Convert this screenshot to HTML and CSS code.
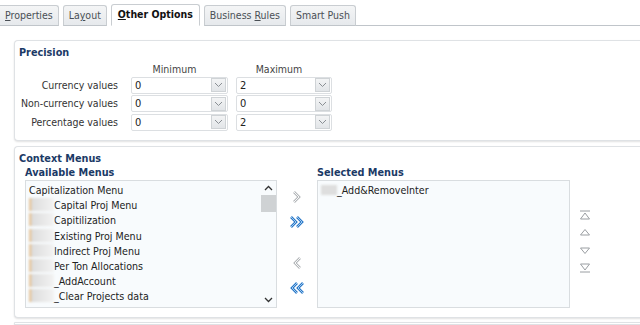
FILE: index.html
```html
<!DOCTYPE html>
<html>
<head>
<meta charset="utf-8">
<link rel="stylesheet" href="styles.css">
</head>
<body>
<div class="tabs">
  <div class="tab"><u>P</u>roperties</div>
  <div class="tab">La<u>y</u>out</div>
  <div class="tab active"><u>O</u>ther Options</div>
  <div class="tab">Business <u>R</u>ules</div>
  <div class="tab">Smart Push</div>
  <div class="tab-fill"></div>
</div>

<div class="panel precision">
  <div class="title">Precision</div>
  <div class="grid">
    <div></div><div class="colhead">Minimum</div><div class="colhead">Maximum</div>
    <div class="lbl">Currency values</div>
    <div class="sel"><span>0</span><i class="dd"><svg width="9" height="6" viewBox="0 0 9 6"><path d="M1 1 L4.5 4.5 L8 1" fill="none" stroke="#8a8f94" stroke-width="1"/></svg></i></div>
    <div class="sel"><span>2</span><i class="dd"><svg width="9" height="6" viewBox="0 0 9 6"><path d="M1 1 L4.5 4.5 L8 1" fill="none" stroke="#8a8f94" stroke-width="1"/></svg></i></div>
    <div class="lbl">Non-currency values</div>
    <div class="sel"><span>0</span><i class="dd"><svg width="9" height="6" viewBox="0 0 9 6"><path d="M1 1 L4.5 4.5 L8 1" fill="none" stroke="#8a8f94" stroke-width="1"/></svg></i></div>
    <div class="sel"><span>0</span><i class="dd"><svg width="9" height="6" viewBox="0 0 9 6"><path d="M1 1 L4.5 4.5 L8 1" fill="none" stroke="#8a8f94" stroke-width="1"/></svg></i></div>
    <div class="lbl">Percentage values</div>
    <div class="sel"><span>0</span><i class="dd"><svg width="9" height="6" viewBox="0 0 9 6"><path d="M1 1 L4.5 4.5 L8 1" fill="none" stroke="#8a8f94" stroke-width="1"/></svg></i></div>
    <div class="sel"><span>2</span><i class="dd"><svg width="9" height="6" viewBox="0 0 9 6"><path d="M1 1 L4.5 4.5 L8 1" fill="none" stroke="#8a8f94" stroke-width="1"/></svg></i></div>
  </div>
</div>

<div class="panel context">
  <div class="title">Context Menus</div>
  <div class="shuttle">
    <div class="col">
      <div class="subtitle">Available Menus</div>
      <div class="listbox">
        <div class="items">
          <div class="item">Capitalization Menu</div>
          <div class="item"><span class="blur"></span>Capital Proj Menu</div>
          <div class="item"><span class="blur"></span>Capitilization</div>
          <div class="item"><span class="blur"></span>Existing Proj Menu</div>
          <div class="item"><span class="blur"></span>Indirect Proj Menu</div>
          <div class="item"><span class="blur"></span>Per Ton Allocations</div>
          <div class="item"><span class="blur"></span>_AddAccount</div>
          <div class="item"><span class="blur"></span>_Clear Projects data</div>
          <div class="item">CEPX_Upload Details</div>
        </div>
        <div class="vscroll">
          <svg class="sarrow" width="9" height="6" viewBox="0 0 9 6"><path d="M1 5 L4.5 1.5 L8 5" fill="none" stroke="#333" stroke-width="1.3"/></svg>
          <div class="thumb"></div>
          <div class="track"></div>
          <svg class="sarrow" width="9" height="6" viewBox="0 0 9 6"><path d="M1 1 L4.5 4.5 L8 1" fill="none" stroke="#333" stroke-width="1.3"/></svg>
        </div>
      </div>
    </div>
    <div class="movers">
      <svg width="14" height="14" viewBox="0 0 14 14"><path d="M4 2 L9 7 L4 12" fill="none" stroke="#b4b7ba" stroke-width="2.6"/><path d="M4 2 L9 7 L4 12" fill="none" stroke="#fff" stroke-width="0.9"/></svg>
      <svg width="16" height="14" viewBox="0 0 16 14"><path d="M2 2 L7 7 L2 12 M8 2 L13 7 L8 12" fill="none" stroke="#2a78c8" stroke-width="2.6"/><path d="M2 2 L7 7 L2 12 M8 2 L13 7 L8 12" fill="none" stroke="#bfe0f7" stroke-width="0.8"/></svg>
      <div class="gap"></div>
      <svg width="14" height="14" viewBox="0 0 14 14"><path d="M10 2 L5 7 L10 12" fill="none" stroke="#b4b7ba" stroke-width="2.6"/><path d="M10 2 L5 7 L10 12" fill="none" stroke="#fff" stroke-width="0.9"/></svg>
      <svg width="16" height="14" viewBox="0 0 16 14"><path d="M14 2 L9 7 L14 12 M8 2 L3 7 L8 12" fill="none" stroke="#2a78c8" stroke-width="2.6"/><path d="M14 2 L9 7 L14 12 M8 2 L3 7 L8 12" fill="none" stroke="#bfe0f7" stroke-width="0.8"/></svg>
    </div>
    <div class="col">
      <div class="subtitle">Selected Menus</div>
      <div class="listbox sel-box">
        <div class="items">
          <div class="item"><span class="blur small"></span>_Add&amp;RemoveInter</div>
        </div>
      </div>
    </div>
    <div class="reorder">
      <svg width="12" height="10" viewBox="0 0 12 10"><path d="M1 1 H11" stroke="#9a9ea2" stroke-width="1"/><path d="M1.5 9 L6 3 L10.5 9 Z" fill="none" stroke="#9a9ea2" stroke-width="1"/></svg>
      <svg width="12" height="10" viewBox="0 0 12 10"><path d="M1.5 8 L6 2.5 L10.5 8 Z" fill="none" stroke="#9a9ea2" stroke-width="1"/></svg>
      <svg class="down" width="12" height="10" viewBox="0 0 12 10"><path d="M1.5 2 L6 7.5 L10.5 2 Z" fill="none" stroke="#9a9ea2" stroke-width="1"/></svg>
      <svg width="12" height="10" viewBox="0 0 12 10"><path d="M1 9 H11" stroke="#9a9ea2" stroke-width="1"/><path d="M1.5 1 L6 7 L10.5 1 Z" fill="none" stroke="#9a9ea2" stroke-width="1"/></svg>
    </div>
  </div>
</div>

<div class="panel bottom"></div>
</body>
</html>
```

FILE: styles.css
```css
* { box-sizing: border-box; }
html, body { margin: 0; padding: 0; background: #fff; }
html { height: 325px; overflow: hidden; }
body {
  font-family: "DejaVu Sans Condensed", "Liberation Sans", sans-serif;
  font-size: 10.5px;
  color: #333;
  width: 640px;
  height: 325px;
  overflow: hidden;
}
u { text-decoration: underline; }

.tabs {
  display: flex;
  align-items: flex-end;
  padding-top: 5px;
  height: 26px;
}
.tab {
  height: 21px;
  padding: 0 5px;
  margin-right: 4px;
  border: 1px solid #c9cdd1;
  border-bottom: 1px solid #c0c5ca;
  border-radius: 3px 3px 0 0;
  background: linear-gradient(#f4f5f6, #e6e9ec);
  color: #4a4f55;
  font-size: 10.5px;
  line-height: 19px;
  white-space: nowrap;
}
.tab:first-child { border-left: none; border-radius: 0 3px 0 0; padding-left: 5px; }
.tab.active {
  height: 22px;
  background: #fff;
  border-bottom-color: #fff;
  color: #111;
  font-weight: bold;
  padding: 0 6px;
}
.tab-fill { flex: 1; border-bottom: 1px solid #c0c5ca; margin-left: -4px; }

.panel {
  margin-left: 14px;
  margin-right: -10px;
  border: 1px solid #dfe2e5;
  border-right: none;
  border-radius: 4px 0 0 4px;
  box-shadow: 0 1px 2px rgba(0,0,0,0.12);
  background: #fff;
}
.precision {
  margin-top: 14px;
  height: 101px;
  padding: 5px 0 0 0;
}
.title {
  font-weight: bold;
  color: #1b3a66;
  font-size: 10.8px;
  padding-left: 4px;
  line-height: 14px;
}
.grid {
  display: grid;
  grid-template-columns: 117px 97px 96px;
  column-gap: 8px;
  row-gap: 1.5px;
  margin-left: -14px;
  margin-top: 4px;
}
.colhead { text-align: center; line-height: 11px; color: #444; }
.lbl { text-align: right; line-height: 17px; white-space: nowrap; }
.sel {
  margin-left: 5px;
  margin-right: -5px;
  height: 17px;
  border: 1px solid #dcdfe2;
  background: #fff;
  display: flex;
  align-items: center;
  justify-content: space-between;
  padding-left: 3px;
  border-radius: 2px;
}
.sel span { line-height: 15px; color: #222; font-size: 11px; }
.dd {
  width: 15px;
  height: 14px;
  margin-right: 1px;
  border: 1px solid #cfd3d6;
  background: linear-gradient(#f3f4f5, #e2e5e8);
  display: flex;
  align-items: center;
  justify-content: center;
}

.context {
  margin-top: 5px;
  height: 172px;
  padding-top: 5px;
}
.shuttle {
  display: flex;
  align-items: flex-start;
  padding-left: 10px;
}
.col { display: flex; flex-direction: column; }
.subtitle {
  font-weight: bold;
  color: #1b3a66;
  font-size: 10.8px;
  line-height: 14px;
}
.listbox {
  width: 252px;
  height: 128px;
  border: 1px solid #d9dde0;
  background: #f8fbfd;
  display: flex;
  overflow: hidden;
}
.items { flex: 1; padding: 2px 0 0 3px; overflow: hidden; }
.item { line-height: 15.2px; white-space: nowrap; color: #222; font-size: 10.6px; }
.blur {
  display: inline-block;
  width: 25px;
  height: 13px;
  vertical-align: -2px;
  background: linear-gradient(90deg, #e6c7a0 0 2px, #dcdcdc 3px, #e9e9e9 60%, #f3f3f3);
  filter: blur(1px);
}
.blur.small { width: 16px; background: #dedede; height: 10px; vertical-align: -1px; }
.vscroll {
  width: 16px;
  display: flex;
  flex-direction: column;
  align-items: center;
  background: #f8fbfd;
}
.sarrow { margin: 4px 0 4px; }
.thumb { width: 15px; height: 17px; background: #cfd2d4; }
.track { flex: 1; }
.movers {
  width: 40px;
  display: flex;
  flex-direction: column;
  align-items: center;
  padding-top: 24px;
  gap: 11px;
}
.movers .gap { height: 5px; }
.sel-box { width: 253px; background: #f8fbfd; }
.reorder {
  display: flex;
  flex-direction: column;
  align-items: center;
  padding-top: 44px;
  margin-left: 9px;
  gap: 7px;
}
.reorder .down { margin-top: 2px; }
.bottom { margin-top: 4px; height: 3px; }
```
